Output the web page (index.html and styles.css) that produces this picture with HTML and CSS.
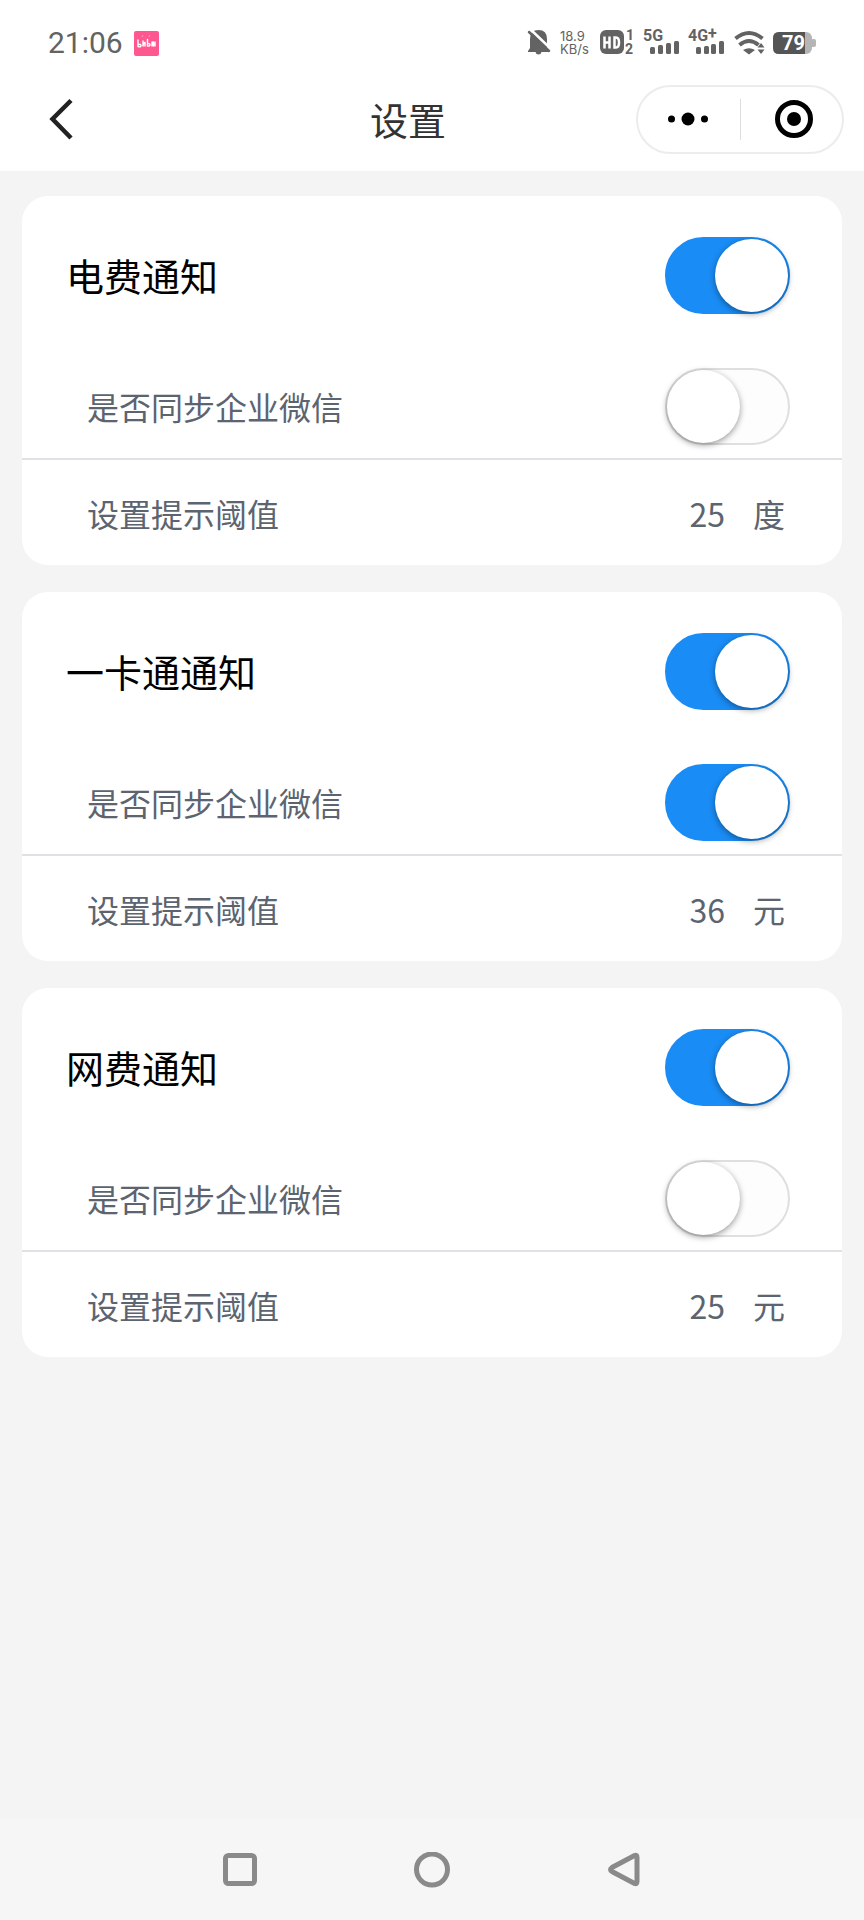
FILE: index.html
```html
<!DOCTYPE html>
<html lang="zh-CN">
<head>
<meta charset="utf-8">
<meta name="viewport" content="width=device-width, initial-scale=1">
<title>设置</title>
<link rel="stylesheet" href="styles.css">
</head>
<body>
<div class="app">
  <div class="status-bar">
    <div class="status-left">
      <span class="clock">21:06</span>
      <svg class="app-icon" width="25" height="25" viewBox="0 0 25 25" aria-hidden="true">
        <rect width="25" height="25" rx="2" fill="#ff5790"/>
        <path d="M8 6l1-2M15 6l1-2" stroke="#ff9abd" fill="none"/>
        <g fill="none" stroke="#fff" stroke-width="1.4" stroke-linecap="round" stroke-linejoin="round">
          <path d="M4 9v6.500q3 1 3-1q0-1.500-2-1M9 10v5M9 15q1-4 2-3.500v3.500M13.500 8.500v6.500q2.500 .5 2.500-1.500q-.5-1.500-2.500-.5M18 11v4M18 15q0-4 1.500-4v4M21 11v4"/>
        </g>
      </svg>
    </div>
    <svg class="status-icons" width="292" height="48" viewBox="524 20 292 48" role="img" aria-label="状态">
      <g fill="#636363">
        <path d="M538.500 31q8.500 0 8.500 9v9l2 3v1h-21v-1l2-3v-9q0-9 8.500-9z"/>
        <path d="M535.500 53h6q-.5 2.500-3 2.500t-3-2.500z"/>
        <path d="M529 29L551 50" stroke="#fff" stroke-width="2.500"/>
        <path d="M529 33L549 52" stroke="#636363" stroke-width="2.500" stroke-linecap="round"/>
        <rect x="600" y="31" width="24" height="24" rx="6"/>
        <rect x="650" y="48" width="5" height="7" rx="1.500"/>
        <rect x="658" y="46" width="5" height="9" rx="1.500"/>
        <rect x="666" y="44" width="5" height="11" rx="1.500"/>
        <rect x="674" y="42" width="5" height="13" rx="1.500"/>
        <rect x="696" y="48" width="5" height="7" rx="1.500"/>
        <rect x="704" y="47" width="5" height="8" rx="1.500"/>
        <rect x="711" y="45" width="5" height="10" rx="1.500"/>
        <rect x="719" y="42" width="5" height="13" rx="1.500"/>
        <path d="M749 55.500l-6-4.500q6-3.500 12 0z"/>
        <path d="M757.500 48.500l3.500-4.500 3.500 4.500zM757.500 50.500l3.500 4.500 3.500-4.500z"/>
        <rect x="773" y="33" width="39" height="22" rx="6" fill="#b5b5b5"/>
        <rect x="811" y="40" width="5" height="8" rx="2" fill="#b5b5b5"/>
        <path d="M779 33h26v22h-26q-6 0-6-6v-10q0-6 6-6z" fill="#555"/>
      </g>
      <path d="M735.500 39.500q13.500-11 27 0M739.500 46q9.500-8 19 0" fill="none" stroke="#636363" stroke-width="4"/>
      <path d="M604.500 37.500v12M609.500 37.500v12M604.500 43.500h5M614.500 38.500h1.500q3 0 3 5t-3 5h-1.500z" fill="none" stroke="#fff" stroke-width="2.500"/>
      <g class="status-text">
        <text x="560" y="42" class="rate">18.9</text>
        <text x="560" y="55" class="rate">KB/s</text>
        <text x="626" y="41" class="tag">1</text>
        <text x="625" y="55" class="tag">2</text>
        <text x="643" y="42" class="net">5G</text>
        <text x="688" y="42" class="net">4G</text>
        <text x="708" y="40" class="net">+</text>
        <text x="782" y="51" class="battery">79</text>
      </g>
    </svg>
  </div>

  <header class="nav-bar">
    <button class="back" type="button" aria-label="返回">
      <svg width="26" height="44" viewBox="0 0 26 44" aria-hidden="true"><path d="M23 3.500L4.500 22L23 41" fill="none" stroke="#222" stroke-width="4.500"/></svg>
    </button>
    <h1 class="title">设置</h1>
    <div class="capsule">
      <button class="capsule-button" type="button" aria-label="更多">
        <svg width="42" height="16" viewBox="0 0 42 16" aria-hidden="true"><circle cx="3.500" cy="8" r="3.500"/><circle cx="20" cy="8" r="6.500"/><circle cx="36.500" cy="8" r="3.500"/></svg>
      </button>
      <span class="capsule-divider"></span>
      <button class="capsule-button capsule-close" type="button" aria-label="关闭">
        <svg width="40" height="40" viewBox="0 0 40 40" aria-hidden="true"><circle cx="20" cy="20" r="16.500" fill="none" stroke="#000" stroke-width="5"/><circle cx="20" cy="20" r="7"/></svg>
      </button>
    </div>
  </header>

  <main class="content">
    <section class="card">
      <div class="row row-main">
        <label for="power">电费通知</label>
        <input class="switch" id="power" type="checkbox" role="switch" checked>
      </div>
      <div class="row row-sync">
        <label for="power-sync">是否同步企业微信</label>
        <input class="switch" id="power-sync" type="checkbox" role="switch">
      </div>
      <div class="row row-limit">
        <label for="power-limit">设置提示阈值</label>
        <span class="limit"><input class="limit-value" id="power-limit" type="text" inputmode="numeric" value="25"><span>度</span></span>
      </div>
    </section>

    <section class="card">
      <div class="row row-main">
        <label for="campus">一卡通通知</label>
        <input class="switch" id="campus" type="checkbox" role="switch" checked>
      </div>
      <div class="row row-sync">
        <label for="campus-sync">是否同步企业微信</label>
        <input class="switch" id="campus-sync" type="checkbox" role="switch" checked>
      </div>
      <div class="row row-limit">
        <label for="campus-limit">设置提示阈值</label>
        <span class="limit"><input class="limit-value" id="campus-limit" type="text" inputmode="numeric" value="36"><span>元</span></span>
      </div>
    </section>

    <section class="card">
      <div class="row row-main">
        <label for="net">网费通知</label>
        <input class="switch" id="net" type="checkbox" role="switch" checked>
      </div>
      <div class="row row-sync">
        <label for="net-sync">是否同步企业微信</label>
        <input class="switch" id="net-sync" type="checkbox" role="switch">
      </div>
      <div class="row row-limit">
        <label for="net-limit">设置提示阈值</label>
        <span class="limit"><input class="limit-value" id="net-limit" type="text" inputmode="numeric" value="25"><span>元</span></span>
      </div>
    </section>
  </main>

  <nav class="system-nav">
    <button type="button" aria-label="最近任务"><svg width="36" height="36" viewBox="0 0 36 36" aria-hidden="true"><rect x="3.500" y="3.500" width="29" height="28" rx="3"/></svg></button>
    <button type="button" aria-label="主屏幕"><svg width="36" height="36" viewBox="0 0 36 36" aria-hidden="true"><circle cx="18" cy="17.500" r="15.500"/></svg></button>
    <button type="button" aria-label="返回上一级"><svg width="36" height="36" viewBox="0 0 36 36" aria-hidden="true"><path d="M28.500 3.500q2.500-1 2.500 2v24q0 3-2.500 2L6 19.500q-3-2 0-4z"/></svg></button>
  </nav>
</div>
</body>
</html>
```

FILE: styles.css
```css
* {
  box-sizing: border-box;
}

body {
  margin: 0;
  background: #f4f4f4;
  font-family: "Noto Sans CJK SC", sans-serif;
}

button {
  display: flex;
  align-items: center;
  justify-content: center;
  padding: 0;
  border: 0;
  background: none;
}

svg {
  display: block;
}

.app {
  display: flex;
  flex-direction: column;
  min-height: 100vh;
}

/* Status bar */
.status-bar {
  display: flex;
  align-items: center;
  justify-content: space-between;
  height: 70px;
  padding: 16px 48px 0;
  background: #fff;
}

.status-left {
  display: flex;
  align-items: center;
  gap: 11px;
}

.clock {
  color: #636363;
  font: 30px/32px Roboto, sans-serif;
}

.status-text {
  fill: #636363;
  font-family: Roboto, sans-serif;
}

.rate {
  font-family: Inter, sans-serif;
  font-size: 13px;
}

.tag {
  font-size: 14px;
  font-weight: 700;
}

.net {
  font-size: 16px;
  font-weight: 700;
}

.battery {
  fill: #fff;
  font-size: 20px;
  font-weight: 700;
}

/* Title bar */
.nav-bar {
  display: flex;
  align-items: center;
  height: 101px;
  padding: 0 20px 3px 48px;
  background: #fff;
}

.back {
  justify-content: flex-start;
  width: 132px;
  height: 64px;
}

.title {
  flex: 1;
  margin: 0;
  color: #333;
  font-size: 38px;
  font-weight: 400;
  line-height: 56px;
  text-align: center;
}

.capsule {
  display: grid;
  grid-template-columns: 1fr 1px 1fr;
  align-items: center;
  width: 208px;
  height: 69px;
  border: 2px solid #ececec;
  border-radius: 35px;
}

.capsule-button {
  height: 100%;
}

.capsule-close {
  padding-left: 6px;
}

.capsule-divider {
  height: 41px;
  background: #ddd;
}

/* Settings cards */
.content {
  display: flex;
  flex: 1;
  flex-direction: column;
  gap: 27px;
  padding: 25px 22px;
}

.card {
  border-radius: 26px;
  background: #fff;
}

.row {
  display: flex;
  align-items: center;
  justify-content: space-between;
  padding: 0 52px 0 65px;
  color: #5c6470;
  font-size: 32px;
  line-height: 48px;
}

.row-main {
  height: 158px;
  padding-left: 44px;
  color: #000;
  font-size: 38px;
  line-height: 56px;
}

.row-sync {
  height: 106px;
  border-bottom: 2px solid #dfe1e4;
}

.row-limit {
  height: 105px;
  padding-right: 57px;
}

.limit {
  display: flex;
  gap: 28px;
}

.limit-value {
  width: 80px;
  height: 48px;
  padding: 0;
  border: 0;
  background: none;
  color: inherit;
  font: inherit;
  text-align: right;
}

.switch {
  width: 125px;
  height: 77px;
  margin: 0;
  padding: 0;
  border: 2px solid #dfdfdf;
  border-radius: 39px;
  background: #fdfdfd;
  appearance: none;
}

.switch::before {
  content: "";
  display: block;
  width: 73px;
  height: 73px;
  border-radius: 50%;
  background: #fff;
  box-shadow: 0 2px 6px rgba(0, 0, 0, 0.4);
}

.switch:checked {
  border-color: #1a8cf5;
  background: #1a8cf5;
}

.switch:checked::before {
  margin-left: auto;
}

/* System navigation */
.system-nav {
  display: grid;
  grid-template-columns: repeat(3, 1fr);
  height: 101px;
  padding: 0 calc(100% / 6);
  background: #f6f6f6;
}

.system-nav svg {
  fill: none;
  stroke: #8a8a8a;
  stroke-width: 5;
}
```
